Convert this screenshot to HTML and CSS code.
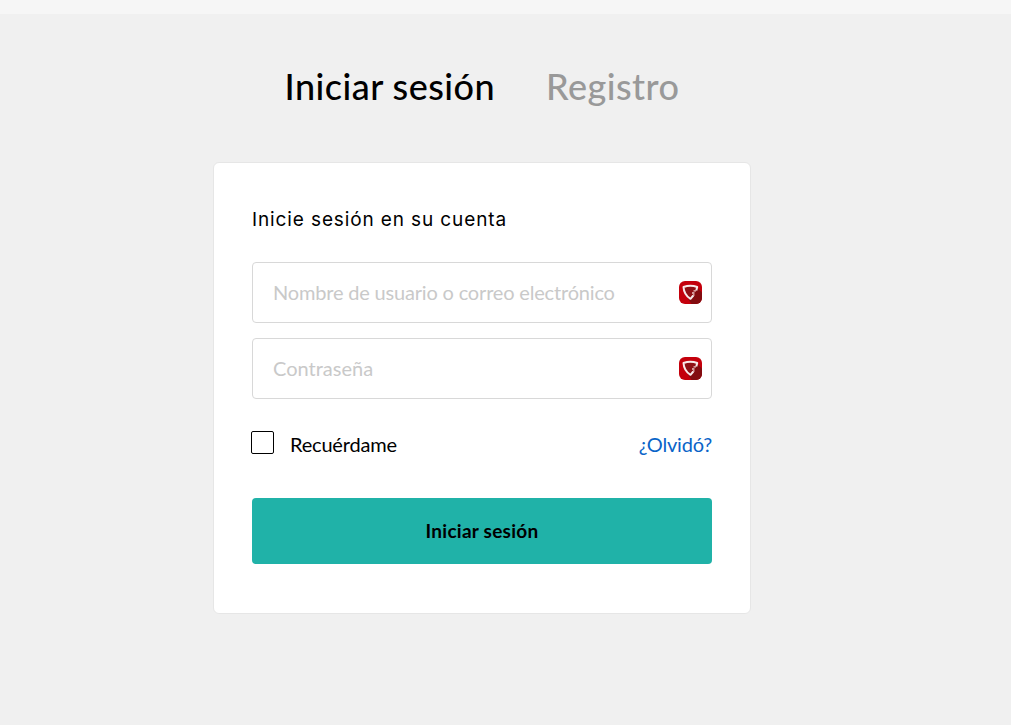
FILE: index.html
```html
<!DOCTYPE html>
<html lang="es">
<head>
  <meta charset="UTF-8" />
  <meta name="viewport" content="width=device-width, initial-scale=1.0"/>
  <title>Iniciar sesión</title>
  <link rel="stylesheet" href="styles.css">
</head>
<body>
  <header class="topbar"></header>

  <main class="login">
    <nav class="tabs">
      <a class="tab active" href="#">Iniciar sesión</a>
      <a class="tab" href="#">Registro</a>
    </nav>

    <form class="card">
      <p class="intro">Inicie sesión en su cuenta</p>

      <div class="campo">
        <input class="usuario" type="text" placeholder="Nombre de usuario o correo electrónico" />
        <svg class="gestor" viewBox="0 0 23 23">
          <rect width="23" height="23" rx="6" fill="#c4000c"/>
          <path d="M18.5 7L23 11.5V17a6 6 0 0 1-6 6h-4.500L9 17.500z" fill="#830c10"/>
          <path d="M5 6.500Q11.500 3.500 18 6.500L17.500 9.500L15.500 11L13.500 14.500L11.500 17.500Q5.500 14 5 6.500z" fill="#8f1015"/>
          <path d="M17.300 9.500L18.200 6Q11.500 3.300 4.500 6Q5 14 11.500 17.800L14.300 14.500" fill="none" stroke="#f8eaea" stroke-width="2" stroke-linejoin="round"/>
          <path d="M14.500 9.800h2.500M13 12h2.500M14 14h1.500" stroke="#edc8c8" stroke-width="1.300"/>
        </svg>
      </div>

      <div class="campo">
        <input class="clave" type="password" placeholder="Contraseña" />
        <svg class="gestor" viewBox="0 0 23 23">
          <rect width="23" height="23" rx="6" fill="#c4000c"/>
          <path d="M18.5 7L23 11.5V17a6 6 0 0 1-6 6h-4.500L9 17.500z" fill="#830c10"/>
          <path d="M5 6.500Q11.500 3.500 18 6.500L17.500 9.500L15.500 11L13.500 14.500L11.500 17.500Q5.500 14 5 6.500z" fill="#8f1015"/>
          <path d="M17.300 9.500L18.200 6Q11.500 3.300 4.500 6Q5 14 11.500 17.800L14.300 14.500" fill="none" stroke="#f8eaea" stroke-width="2" stroke-linejoin="round"/>
          <path d="M14.500 9.800h2.500M13 12h2.500M14 14h1.500" stroke="#edc8c8" stroke-width="1.300"/>
        </svg>
      </div>

      <div class="opciones">
        <label class="recordar"><input type="checkbox" /> Recuérdame</label>
        <a class="olvido" href="#">¿Olvidó?</a>
      </div>

      <button class="entrar" type="button">Iniciar sesión</button>
    </form>
  </main>
</body>
</html>
```

FILE: styles.css
```css
* {
  box-sizing: border-box;
}
body {
  margin: 0;
  background-color: #f0f0f0;
  color: #000;
  font-family: Lato, sans-serif;
}
a {
  text-decoration: none;
}
.topbar {
  height: 14px;
  background: #f6f6f6;
}
.login {
  width: 538px;
  margin-left: 213px;
  padding-top: 47px;
}
.tabs {
  display: flex;
  justify-content: center;
  gap: 51px;
  height: 101px;
  font-size: 36px;
  font-weight: 500;
  line-height: 50px;
  letter-spacing: 0.45px;
  white-space: nowrap;
}
.tab {
  color: #999;
}
.tab.active {
  color: #000;
}
.card {
  height: 452px;
  padding: 37px 38px;
  background: #fff;
  border: 1px solid #e6e6e6;
  border-radius: 6px;
}
.intro {
  margin: 0 0 23px;
  font-family: Inter, sans-serif;
  font-size: 19px;
  line-height: 39px;
  letter-spacing: 0.88px;
}
.campo {
  position: relative;
  height: 61px;
  margin-bottom: 15px;
}
.campo input {
  width: 100%;
  height: 61px;
  padding: 0 50px 2px 20px;
  border: 1px solid #d8d8d8;
  border-radius: 4px;
  background: #fff;
  font-family: Lato, sans-serif;
  font-size: 20px;
}
.campo input::placeholder {
  color: #c9c9c9;
}
.campo .usuario {
  letter-spacing: -0.18px;
}
.gestor {
  position: absolute;
  top: 19px;
  right: 10px;
  width: 23px;
  height: 23px;
}
.opciones {
  display: flex;
  justify-content: space-between;
  align-items: center;
  height: 28px;
  margin: 31px 0 40px;
  font-size: 20px;
  letter-spacing: -0.2px;
}
.recordar {
  display: flex;
  align-items: center;
}
.recordar input {
  appearance: none;
  width: 23px;
  height: 23px;
  margin: 0 16px 3px -1px;
  border: 1px solid #000;
  border-radius: 2px;
}
.olvido {
  color: #0a64c8;
}
.entrar {
  display: block;
  width: 100%;
  height: 66px;
  padding: 0 0 2px;
  border: 0;
  border-radius: 4px;
  background: #20b2a8;
  color: #000;
  font-family: Lato, sans-serif;
  font-size: 19px;
  font-weight: 700;
  letter-spacing: 0.25px;
}
```
